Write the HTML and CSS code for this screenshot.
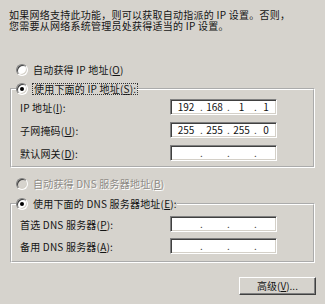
FILE: index.html
```html
<!DOCTYPE html>
<html lang="zh-CN">
<head>
<meta charset="utf-8">
<link rel="stylesheet" href="styles.css">
</head>
<body>
<div class="page">
  <p class="desc"><span class="line">如果网络支持此功能，则可以获取自动指派的 IP 设置。否则，</span><span class="line">您需要从网络系统管理员处获得适当的 IP 设置。</span></p>

  <div class="option opt-ip-auto"><span class="radio"></span><span class="label">自动获得 IP 地址(<u>O</u>)</span></div>

  <fieldset class="group group-ip">
    <legend class="option"><span class="radio checked"></span><span class="label focus">使用下面的 IP 地址(<u>S</u>):</span></legend>
    <div class="rows rows-ip">
      <span class="flabel">IP 地址(<u>I</u>):</span>
      <div class="ip"><span>192</span><i>.</i><span>168</span><i>.</i><span>1</span><i>.</i><span>1</span></div>
      <span class="flabel">子网掩码(<u>U</u>):</span>
      <div class="ip"><span>255</span><i>.</i><span>255</span><i>.</i><span>255</span><i>.</i><span>0</span></div>
      <span class="flabel">默认网关(<u>D</u>):</span>
      <div class="ip"><span></span><i>.</i><span></span><i>.</i><span></span><i>.</i><span></span></div>
    </div>
  </fieldset>

  <div class="option opt-dns-auto disabled"><span class="radio"></span><span class="label">自动获得 DNS 服务器地址(<u>B</u>)</span></div>

  <fieldset class="group group-dns">
    <legend class="option"><span class="radio checked"></span><span class="label">使用下面的 DNS 服务器地址(<u>E</u>):</span></legend>
    <div class="rows rows-dns">
      <span class="flabel">首选 DNS 服务器(<u>P</u>):</span>
      <div class="ip"><span></span><i>.</i><span></span><i>.</i><span></span><i>.</i><span></span></div>
      <span class="flabel">备用 DNS 服务器(<u>A</u>):</span>
      <div class="ip"><span></span><i>.</i><span></span><i>.</i><span></span><i>.</i><span></span></div>
    </div>
  </fieldset>

  <div class="actions"><button class="btn" type="button">高级(<u>V</u>)...</button></div>
</div>
</body>
</html>
```

FILE: styles.css
```css
* { box-sizing: border-box; }

html, body {
  margin: 0;
  background: #d6d3cd;
}

body {
  font-family: "Noto Sans CJK SC", "Liberation Sans", sans-serif;
  font-size: 10px;
  color: #141414;
}

.page {
  width: 325px;
  height: 304px;
  padding: 9px 9px 0 9px;
  overflow: hidden;
}

.desc {
  margin: 0;
  display: flex;
  flex-direction: column;
  white-space: nowrap;
  letter-spacing: 0.25px;
}

.desc .line {
  display: block;
  height: 11px;
  line-height: 11px;
}

u { text-decoration: underline; text-underline-offset: 1px; }

.option {
  display: flex;
  align-items: center;
  height: 13px;
  line-height: 13px;
  white-space: nowrap;
}

.opt-ip-auto { margin: 32px 0 0 7px; }
.opt-dns-auto { margin: 9px 0 0 7px; }

.radio {
  position: relative;
  flex: none;
  width: 12px;
  height: 12px;
  border-radius: 50%;
  background: #fff;
  border: 1px solid;
  border-color: #808080 #fff #fff #808080;
  box-shadow: inset 1px 1px 0 #404040, inset -1px -1px 0 #d4d0c8;
}

.radio.checked::after {
  content: "";
  position: absolute;
  left: 3px;
  top: 3px;
  width: 4px;
  height: 4px;
  border-radius: 50%;
  background: #000;
}

.label { margin-left: 5px; letter-spacing: 0.2px; }

.focus {
  outline: 1px dotted #333;
  padding: 0 1px;
  line-height: 10px;
}

.disabled .radio { background: #d6d3cd; }
.disabled .label {
  color: #8e8b86;
  text-shadow: 1px 1px 0 #fff;
}

.group {
  margin: 6px 1px 0 1px;
  border: 2px groove #fff;
  min-width: 0;
}

.group legend {
  padding: 0;
  height: 14px;
  line-height: 14px;
}

.group-ip { padding: 3px 0 5px 4px; margin-top: 6px; }
.group-dns { padding: 5px 0 7px 4px; margin-top: 7px; }

.rows {
  display: grid;
  grid-template-columns: 150px 107px;
  grid-auto-rows: 16px;
  align-items: center;
  margin-left: 4px;
}

.rows-ip { row-gap: 7px; }
.rows-dns { row-gap: 6px; }

.flabel { white-space: nowrap; letter-spacing: 0.2px; }

.ip {
  display: grid;
  grid-template-columns: 28px 2px 25px 2px 25px 2px 1fr;
  align-items: center;
  height: 16px;
  padding-left: 1px;
  background: #fff;
  border: 1px solid;
  border-color: #808080 #fff #fff #808080;
  box-shadow: inset 1px 1px 0 #404040, inset -1px -1px 0 #d4d0c8;
  line-height: 12px;
  color: #111;
}

.ip span { text-align: center; }
.ip i { font-style: normal; text-align: center; color: #444; }

.actions {
  display: flex;
  justify-content: flex-end;
  margin-top: 14px;
}

.btn {
  width: 77px;
  height: 18px;
  padding: 0;
  font: inherit;
  color: #141414;
  background: #d6d3cd;
  border: 1px solid;
  border-color: #fff #404040 #404040 #fff;
  box-shadow: inset -1px -1px 0 #808080;
  line-height: 14px;
}
```
